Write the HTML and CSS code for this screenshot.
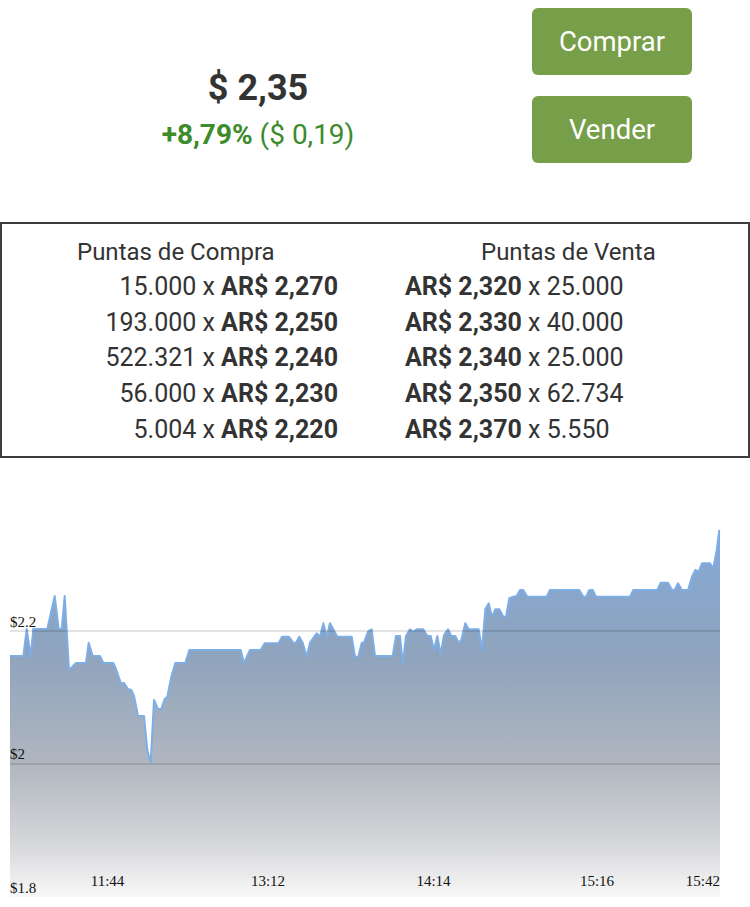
FILE: index.html
```html
<!DOCTYPE html>
<html lang="es">
<head>
<meta charset="utf-8">
<link rel="stylesheet" href="styles.css">
</head>
<body>
<div class="top">
  <div class="quote">
    <div class="price">$ 2,35</div>
    <div class="change"><span class="pct">+8,79%</span> ($ 0,19)</div>
  </div>
  <div class="actions">
    <button class="btn">Comprar</button>
    <button class="btn">Vender</button>
  </div>
</div>
<div class="book">
  <div class="col bids">
    <div class="head">Puntas de Compra</div>
    <div class="row">15.000 x <b>AR$ 2,270</b></div>
    <div class="row">193.000 x <b>AR$ 2,250</b></div>
    <div class="row">522.321 x <b>AR$ 2,240</b></div>
    <div class="row">56.000 x <b>AR$ 2,230</b></div>
    <div class="row">5.004 x <b>AR$ 2,220</b></div>
  </div>
  <div class="col asks">
    <div class="head">Puntas de Venta</div>
    <div class="row"><b>AR$ 2,320</b> x 25.000</div>
    <div class="row"><b>AR$ 2,330</b> x 40.000</div>
    <div class="row"><b>AR$ 2,340</b> x 25.000</div>
    <div class="row"><b>AR$ 2,350</b> x 62.734</div>
    <div class="row"><b>AR$ 2,370</b> x 5.550</div>
  </div>
</div>
<svg class="chart" width="750" height="437" viewBox="0 470 750 437">
  <defs>
    <linearGradient id="fill" gradientUnits="userSpaceOnUse" x1="0" y1="530" x2="0" y2="900">
      <stop offset="0" stop-color="#84a9d8"/>
      <stop offset="0.33" stop-color="#8ea3bd"/>
      <stop offset="0.63" stop-color="#b0b6bf"/>
      <stop offset="0.85" stop-color="#d6d7da"/>
      <stop offset="1" stop-color="#fafafa"/>
    </linearGradient>
  </defs>
  <path class="area" fill="url(#fill)" d="M10,656 L23.3,656 L26.7,629 L30.7,656.7 L33.3,629 L47.3,629 L54.7,596 L58.7,629 L61.7,629 L64.7,596 L69,670 L76,663 L86,663 L88.7,642.7 L92.7,656 L100,656 L103.3,663 L113.3,663 L116,669 L120.7,682.7 L124,683 L128,689 L131.3,690 L134,696 L138,716 L144,716 L147.3,750 L150.7,762.7 L154,700 L158,709 L161.3,709 L164.7,699 L167.3,696.7 L171.3,676.7 L175.3,663 L185.3,663 L189.3,650 L240.7,650 L244,663 L250,650 L260.7,650 L264.7,643.3 L278.7,643.3 L282,636.7 L288.7,636.7 L293.3,642.7 L296,642.7 L299.3,636.7 L302.7,642.7 L306.7,656.7 L310,642.7 L316.7,633.3 L320,636.7 L323.3,623.3 L326.7,636.7 L330,623.3 L337.3,636.7 L351.7,636.7 L355,656.7 L358.3,656.7 L361.7,642.7 L364,642.7 L368,631.7 L371.7,629.3 L375,656 L392.7,656 L396,636 L400,636 L402.7,664 L406,636 L410,629.3 L413.3,631.7 L416.7,629.3 L423.3,629.3 L427.3,636 L430.7,636 L434,650 L437.3,636 L440.7,654 L444,635 L448,629.3 L451.3,636 L455.3,636 L458.7,642.7 L461.3,640 L465.3,623.3 L468.7,629.3 L478.7,629.3 L482,650 L485.3,609.3 L488.7,603.3 L492,616.7 L495.3,609.3 L499.3,609.3 L503.3,616.7 L506,616.7 L509.3,598.3 L513.3,596.7 L516.7,596 L520,590 L523.3,590 L527.3,596.7 L546.7,596.7 L550,590 L579.3,590 L583.3,596.7 L586,596.7 L589.3,590 L592.7,590 L596,596.7 L630,596.7 L633.3,590 L657.3,590 L660.7,582.7 L668,582.7 L672,590 L674.7,590 L678,583.3 L682,590 L688,590 L692,576.7 L695.3,570 L698.7,571.7 L702,563.3 L710,563.3 L713.3,568.3 L716.7,550 L719.3,530 L720,530 L720,897 L10,897 Z"/>
  <path class="line" d="M10,656 L23.3,656 L26.7,629 L30.7,656.7 L33.3,629 L47.3,629 L54.7,596 L58.7,629 L61.7,629 L64.7,596 L69,670 L76,663 L86,663 L88.7,642.7 L92.7,656 L100,656 L103.3,663 L113.3,663 L116,669 L120.7,682.7 L124,683 L128,689 L131.3,690 L134,696 L138,716 L144,716 L147.3,750 L150.7,762.7 L154,700 L158,709 L161.3,709 L164.7,699 L167.3,696.7 L171.3,676.7 L175.3,663 L185.3,663 L189.3,650 L240.7,650 L244,663 L250,650 L260.7,650 L264.7,643.3 L278.7,643.3 L282,636.7 L288.7,636.7 L293.3,642.7 L296,642.7 L299.3,636.7 L302.7,642.7 L306.7,656.7 L310,642.7 L316.7,633.3 L320,636.7 L323.3,623.3 L326.7,636.7 L330,623.3 L337.3,636.7 L351.7,636.7 L355,656.7 L358.3,656.7 L361.7,642.7 L364,642.7 L368,631.7 L371.7,629.3 L375,656 L392.7,656 L396,636 L400,636 L402.7,664 L406,636 L410,629.3 L413.3,631.7 L416.7,629.3 L423.3,629.3 L427.3,636 L430.7,636 L434,650 L437.3,636 L440.7,654 L444,635 L448,629.3 L451.3,636 L455.3,636 L458.7,642.7 L461.3,640 L465.3,623.3 L468.7,629.3 L478.7,629.3 L482,650 L485.3,609.3 L488.7,603.3 L492,616.7 L495.3,609.3 L499.3,609.3 L503.3,616.7 L506,616.7 L509.3,598.3 L513.3,596.7 L516.7,596 L520,590 L523.3,590 L527.3,596.7 L546.7,596.7 L550,590 L579.3,590 L583.3,596.7 L586,596.7 L589.3,590 L592.7,590 L596,596.7 L630,596.7 L633.3,590 L657.3,590 L660.7,582.7 L668,582.7 L672,590 L674.7,590 L678,583.3 L682,590 L688,590 L692,576.7 L695.3,570 L698.7,571.7 L702,563.3 L710,563.3 L713.3,568.3 L716.7,550 L719.3,530"/>
  <line class="grid" x1="10" y1="631" x2="720" y2="631"/>
  <line class="grid" x1="10" y1="764" x2="720" y2="764"/>
  <text class="lbl" x="10" y="627">$2.2</text>
  <text class="lbl" x="10" y="759">$2</text>
  <text class="lbl" x="10" y="893">$1.8</text>
  <text class="lbl" x="107.5" y="886" text-anchor="middle">11:44</text>
  <text class="lbl" x="268" y="886" text-anchor="middle">13:12</text>
  <text class="lbl" x="433.5" y="886" text-anchor="middle">14:14</text>
  <text class="lbl" x="597" y="886" text-anchor="middle">15:16</text>
  <text class="lbl" x="720" y="886" text-anchor="end">15:42</text>
</svg>
</body>
</html>
```
FILE: styles.css
```css
html, body {
  margin: 0;
  padding: 0;
  background: #fff;
}
body {
  font-family: Roboto, "Liberation Sans", sans-serif;
  color: #333;
  width: 750px;
}
.top {
  display: grid;
  grid-template-columns: 516px 160px;
  column-gap: 16px;
  padding-top: 8px;
  height: 214px;
  box-sizing: border-box;
}
.quote {
  text-align: center;
  padding-top: 60px;
}
.price {
  font-size: 36px;
  font-weight: 700;
  line-height: 40px;
  color: #333;
}
.change {
  font-size: 28px;
  line-height: 34px;
  margin-top: 10px;
  color: #3d8b2b;
}
.pct {
  font-weight: 700;
}
.actions {
  display: flex;
  flex-direction: column;
  gap: 21px;
}
.btn {
  height: 67px;
  width: 160px;
  border: none;
  border-radius: 6px;
  background: #779e48;
  color: #fff;
  font-family: Roboto, "Liberation Sans", sans-serif;
  font-size: 27.5px;
  padding: 0;
}
.book {
  margin-top: 8px;
  border: 2px solid #3d3d3d;
  height: 236px;
  box-sizing: border-box;
  display: grid;
  grid-template-columns: 372px 1fr;
  padding-top: 13px;
}
.col {
  font-size: 25px;
  line-height: 35.7px;
}
.head {
  font-size: 24px;
  line-height: 30px;
  margin-bottom: 2px;
}
.bids {
  text-align: right;
  padding-right: 36px;
}
.bids .head {
  text-align: left;
  padding-left: 75px;
}
.asks {
  padding-left: 31px;
}
.asks .head {
  padding-left: 76px;
}
.row b {
  font-weight: 700;
}
.chart {
  display: block;
  margin-top: 12px;
}
.area {
  stroke: none;
}
.line {
  fill: none;
  stroke: #7eaee6;
  stroke-width: 2;
  stroke-linejoin: round;
}
.grid {
  stroke: rgba(0, 0, 0, 0.11);
  stroke-width: 2;
}
.lbl {
  font-family: "Liberation Serif", serif;
  font-size: 15px;
  fill: #111;
}
```
